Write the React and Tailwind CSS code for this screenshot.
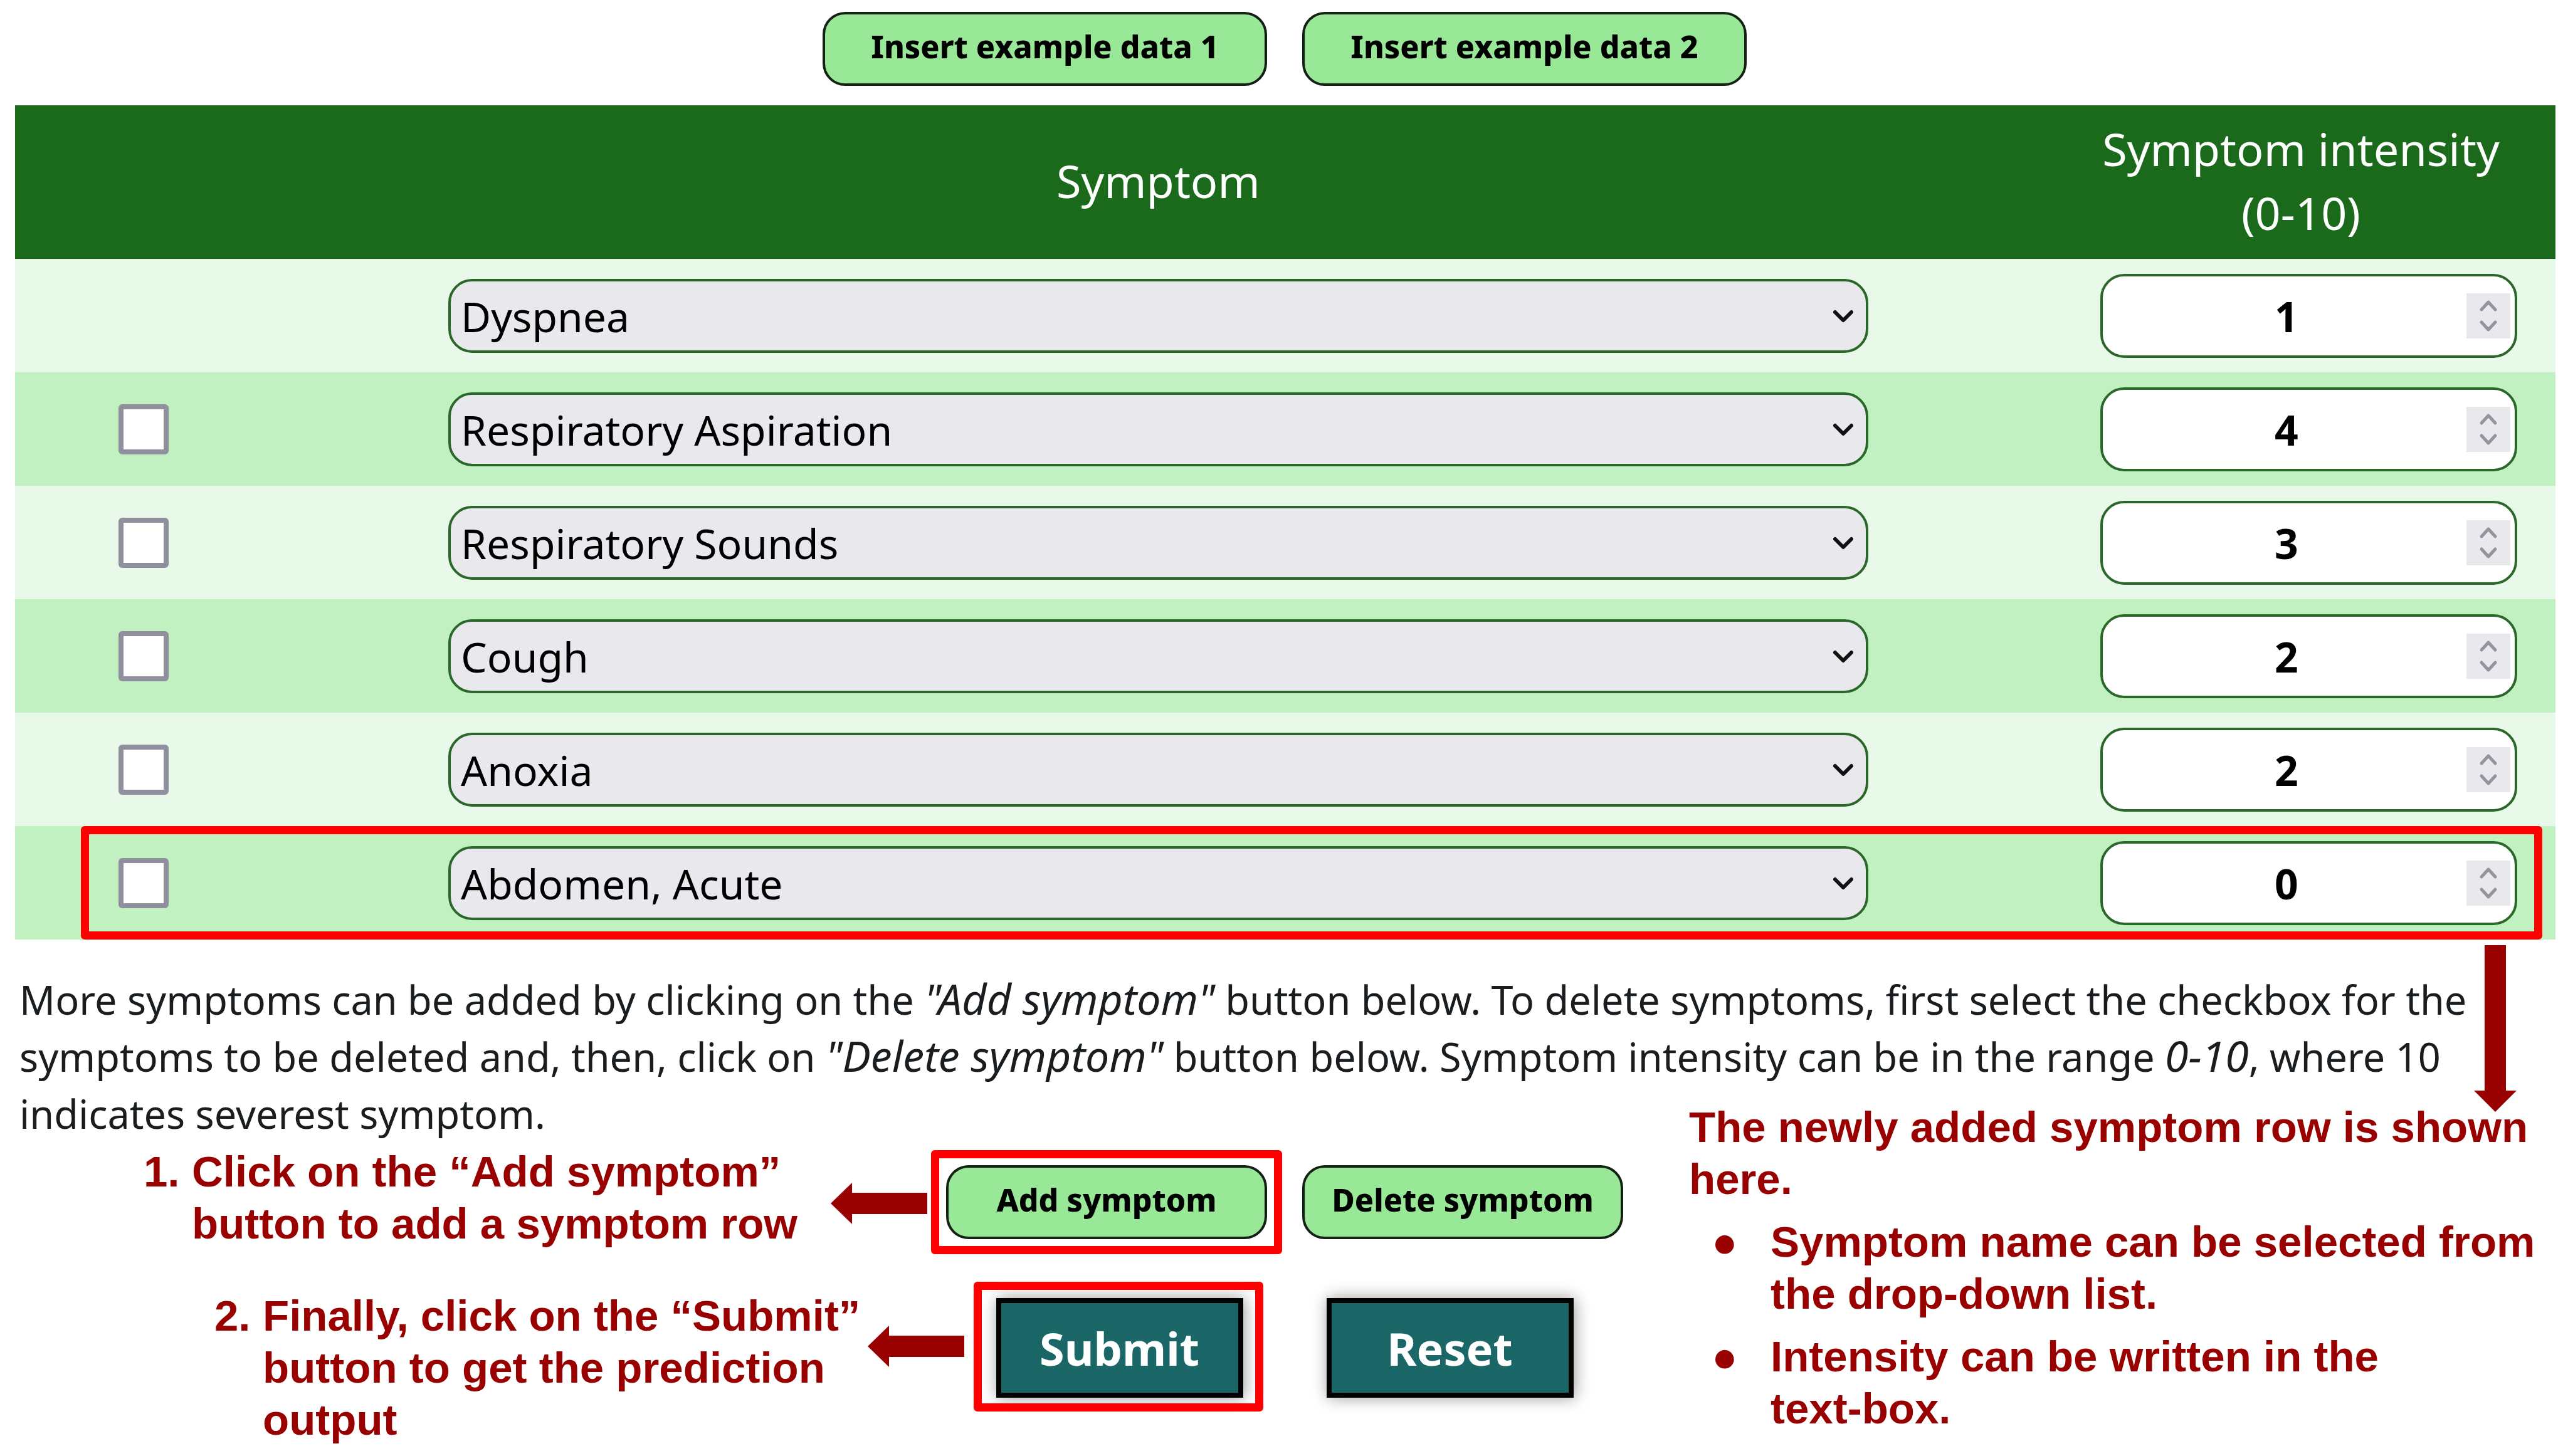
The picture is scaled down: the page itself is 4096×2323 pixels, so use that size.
const symptoms = [
  { name: "Dyspnea", intensity: 1, removable: false },
  { name: "Respiratory Aspiration", intensity: 4, removable: true },
  { name: "Respiratory Sounds", intensity: 3, removable: true },
  { name: "Cough", intensity: 2, removable: true },
  { name: "Anoxia", intensity: 2, removable: true },
  { name: "Abdomen, Acute", intensity: 0, removable: true, highlighted: true },
];

function PillButton({ children, wide }) {
  return (
    <button
      type="button"
      className={
        "h-[118px] rounded-[36px] border-4 border-[#142114] bg-[#98e898] pb-[8px] text-center text-[50px] leading-[72px] font-extrabold text-black " +
        (wide ? "w-[709px]" : "w-[512px]")
      }
    >
      {children}
    </button>
  );
}

function ActionButton({ children, type }) {
  return (
    <button
      type={type}
      className="h-[159px] w-[394px] border-8 border-black bg-[#1b6767] text-center text-[72px] leading-[96px] font-bold text-white shadow-[2px_0_24px_rgba(0,0,0,0.4)]"
    >
      {children}
    </button>
  );
}

function Highlight({ className }) {
  return (
    <span
      aria-hidden="true"
      className={"pointer-events-none absolute rounded-[6px] border-[13px] border-[#ff0000] " + className}
    />
  );
}

function LeftArrow() {
  return (
    <svg viewBox="0 0 154 66" className="h-[66px] w-[154px] shrink-0" aria-hidden="true">
      <path d="M0 33 34 0V16H154V50H34V66Z" fill="#990000" />
    </svg>
  );
}

function SymptomRow({ symptom, index }) {
  const { name, intensity, removable, highlighted } = symptom;
  return (
    <tr className="relative h-[181px] odd:bg-[#e8f8e9] even:bg-[#c1f0c1]">
      <td className="p-0 pl-[30px]">
        {removable && (
          <input
            type="checkbox"
            aria-label={"Select " + name}
            className="mx-auto block size-[80px] appearance-none rounded-[6px] border-8 border-[#8f8f9d] bg-white"
          />
        )}
      </td>
      <td className="p-0">
        <div className="relative mx-auto w-[78.5%]">
          <select
            aria-label={"Symptom " + (index + 1)}
            defaultValue={name}
            className="block h-[118px] w-full appearance-none rounded-[38px] border-4 border-[#2a682a] bg-[#e9e9ed] pl-[16px] text-[66px] leading-[90px] text-black"
          >
            {symptoms.map((s) => (
              <option key={s.name}>{s.name}</option>
            ))}
          </select>
          <svg
            viewBox="0 0 32 22"
            className="pointer-events-none absolute top-[49px] right-[24px] h-[22px] w-[32px]"
            fill="none"
            stroke="#111"
            strokeWidth="6"
            aria-hidden="true"
          >
            <path d="M3 4 16 17 29 4" strokeLinecap="round" strokeLinejoin="round" />
          </svg>
        </div>
      </td>
      <td className="p-0">
        <div className="relative mx-auto w-[665px]">
          <input
            type="number"
            min="0"
            max="10"
            aria-label={name + " intensity"}
            defaultValue={intensity}
            className="block h-[134px] w-full appearance-none rounded-[38px] border-4 border-[#2a682a] bg-white pr-[72px] text-center text-[66px] leading-[90px] font-bold text-black [appearance:textfield] [&::-webkit-inner-spin-button]:appearance-none"
          />
          <svg
            viewBox="0 0 70 72"
            className="pointer-events-none absolute top-[31px] right-[11px] h-[72px] w-[70px]"
            fill="none"
            aria-hidden="true"
          >
            <rect width="70" height="72" fill="#e9e9ed" />
            <path
              d="M24 26 35 14 46 26M24 46 35 58 46 46"
              stroke="#9494a0"
              strokeWidth="5"
              strokeLinecap="round"
              strokeLinejoin="round"
            />
          </svg>
        </div>
        {highlighted && <Highlight className="top-0 right-[21px] bottom-0 left-[105px]" />}
      </td>
    </tr>
  );
}

export default function App() {
  return (
    <form
      className="relative min-h-screen w-full overflow-hidden bg-white pt-[19px] font-['Noto_Sans',sans-serif]"
      onSubmit={(e) => e.preventDefault()}
    >
      <div className="flex justify-center gap-[56px] pl-[2px]">
        <PillButton wide>Insert example data 1</PillButton>
        <PillButton wide>Insert example data 2</PillButton>
      </div>

      <div className="relative mt-[31px] mr-[20px] ml-[24px]">
        <table className="w-full table-fixed border-collapse">
          <colgroup>
            <col className="w-[9.4%]" />
            <col />
            <col className="w-[19.4%]" />
          </colgroup>
          <thead>
            <tr className="h-[245px] bg-[#1b691b] text-[72px] leading-[102px] text-white">
              <th className="p-0" aria-label="Select" />
              <th className="p-0 pb-[6px] font-normal">Symptom</th>
              <th className="p-0 pr-[26px] pb-[6px] font-normal">
                Symptom intensity
                <br />
                (0-10)
              </th>
            </tr>
          </thead>
          <tbody>
            {symptoms.map((s, i) => (
              <SymptomRow key={s.name} symptom={s} index={i} />
            ))}
          </tbody>
        </table>
        <svg
          viewBox="0 0 68 266"
          className="absolute top-full right-[62px] mt-[9px] h-[266px] w-[68px]"
          aria-hidden="true"
        >
          <path d="M17 0H51V232H68L34 266 0 232H17Z" fill="#990000" />
        </svg>
      </div>

      <p className="mt-[50px] ml-[31px] text-[63px] leading-[91px] whitespace-nowrap text-[#1a1d20] [&_em]:text-[68px] [&_em]:leading-[60px]">
        More symptoms can be added by clicking on the <em>"Add symptom"</em> button below. To delete symptoms, first select the checkbox for the
        <br />
        symptoms to be deleted and, then, click on <em>"Delete symptom"</em> button below. Symptom intensity can be in the range <em>0-10</em>, where 10
        <br />
        indicates severest symptom.
      </p>

      <div className="flex">
        <ol className="w-[1479px] shrink-0 font-['Liberation_Sans',Arial,sans-serif] text-[69px] leading-[83px] font-bold text-[#990000]">
          <li className="mt-[6px] flex justify-between pl-[229px]">
            <span className="w-[77px] shrink-0">1.</span>
            <span className="grow whitespace-nowrap">
              Click on the “Add symptom”
              <br />
              button to add a symptom row
            </span>
            <span className="flex pt-[59px]">
              <LeftArrow />
            </span>
          </li>
          <li className="mt-[64px] mr-[-59px] flex justify-between pl-[342px]">
            <span className="w-[77px] shrink-0">2.</span>
            <span className="grow whitespace-nowrap">
              Finally, click on the “Submit”
              <br />
              button to get the prediction
              <br />
              output
            </span>
            <span className="flex pt-[57px]">
              <LeftArrow />
            </span>
          </li>
        </ol>

        <div className="w-[1140px] shrink-0">
          <div className="mt-[37px] flex justify-center gap-[56px]">
            <div className="relative">
              <PillButton>Add symptom</PillButton>
              <Highlight className="inset-[-24px]" />
            </div>
            <PillButton>Delete symptom</PillButton>
          </div>
          <div className="mt-[94px] flex justify-center gap-[133px]">
            <div className="relative">
              <ActionButton type="submit">Submit</ActionButton>
              <Highlight className="top-[-26px] right-[-32px] bottom-[-22px] left-[-36px]" />
            </div>
            <ActionButton type="reset">Reset</ActionButton>
          </div>
        </div>

        <div className="mt-[-65px] ml-[75px] font-['Liberation_Sans',Arial,sans-serif] text-[69px] leading-[83px] font-bold whitespace-nowrap text-[#990000]">
          <p>
            The newly added symptom row is shown
            <br />
            here.
          </p>
          <ul>
            <li className="mt-[17px] flex">
              <span className="w-[130px] pl-[36px]">●</span>
              <span>
                Symptom name can be selected from
                <br />
                the drop-down list.
              </span>
            </li>
            <li className="mt-[17px] flex">
              <span className="w-[130px] pl-[36px]">●</span>
              <span>
                Intensity can be written in the
                <br />
                text-box.
              </span>
            </li>
          </ul>
        </div>
      </div>
    </form>
  );
}
